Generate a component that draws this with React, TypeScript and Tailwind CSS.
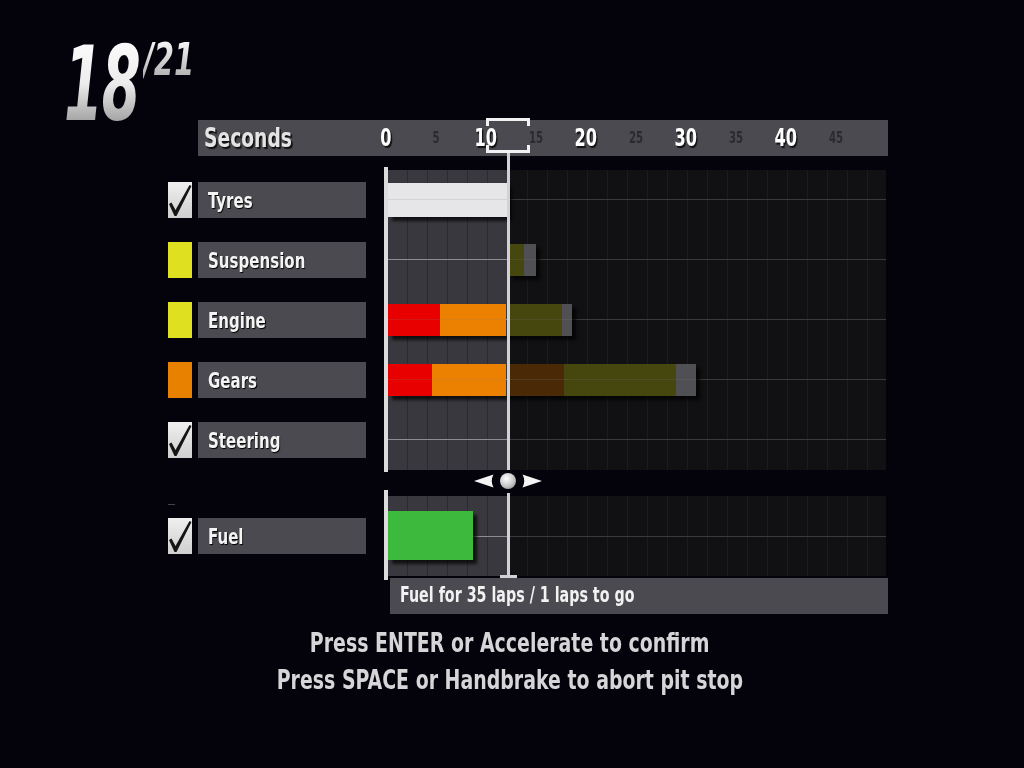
import React from 'react';

type Seg = { w: number; color: string; gap?: number };
type Row = { name: string; mark: string; start?: number; h?: number; segs: Seg[] };

const rows: Row[] = [
  { name: 'Tyres', mark: 'check', h: 34, segs: [{ w: 120, color: '#e6e6e8' }] },
  { name: 'Suspension', mark: '#dfe01f', start: 121, segs: [{ w: 15, color: '#46460f' }, { w: 12, color: '#505054' }] },
  {
    name: 'Engine',
    mark: '#dfe01f',
    segs: [
      { w: 52, color: '#e80000' },
      { w: 66, color: '#ec8000' },
      { w: 53, color: '#46460f', gap: 3 },
      { w: 10, color: '#505054' },
    ],
  },
  {
    name: 'Gears',
    mark: '#e88000',
    segs: [
      { w: 44, color: '#e80000' },
      { w: 74, color: '#ec8000' },
      { w: 55, color: '#4a2a06', gap: 3 },
      { w: 112, color: '#46460f' },
      { w: 20, color: '#505054' },
    ],
  },
  { name: 'Steering', mark: 'check', segs: [] },
];

const ticks = [0, 5, 10, 15, 20, 25, 30, 35, 40, 45];

function Mark({ mark }: { mark: string }) {
  if (mark === 'check') {
    return (
      <div className="w-6 h-9 bg-gradient-to-b from-[#f0f0f0] to-[#cfcfcf]">
        <svg width="24" height="36" viewBox="0 0 24 36">
          <path d="M1 22 L3.5 20.5 L7.5 28 L21.5 3 L23.5 4 L8.5 34 L6.5 34 Z" fill="#151515" />
        </svg>
      </div>
    );
  }
  return <div className="w-6 h-9" style={{ background: mark }} />;
}

function Label({ name, mark }: { name: string; mark: string }) {
  return (
    <div className="flex items-center gap-[6px]">
      <Mark mark={mark} />
      <div className="w-[168px] h-9 bg-[#4a4a50] flex items-center pl-[10px] text-[22px] text-[#f4f4f4] [text-shadow:1px_1px_1px_#000]">
        <span className="inline-block origin-left scale-x-[0.76] whitespace-nowrap">{name}</span>
      </div>
    </div>
  );
}

function Arrow({ flip }: { flip?: boolean }) {
  return (
    <svg width="20" height="14" viewBox="0 0 20 14" className={flip ? 'scale-x-[-1]' : ''}>
      <path d="M0 7 L19.5 0.5 Q16 7 19.5 13.5 Z" fill="#f4f4f4" />
    </svg>
  );
}

export default function App() {
  return (
    <div className="relative w-[1024px] h-[768px] overflow-hidden bg-[#04030b] font-['DejaVu_Sans_Condensed','DejaVu_Sans',sans-serif] font-bold">
      {/* lap counter */}
      <div className="h-[120px] pl-[64px] pt-[32px] flex items-start italic leading-none">
        <span className="inline-block origin-left scale-x-[0.6] text-[104px] tracking-[-2px] bg-gradient-to-b from-white via-[#ececec] to-[#8a8a8a] bg-clip-text text-transparent">
          18
        </span>
        <span className="inline-block origin-left scale-x-[0.72] ml-[-47px] mt-[5px] text-[45px] bg-gradient-to-b from-white to-[#a8a8a8] bg-clip-text text-transparent">
          /21
        </span>
      </div>

      <div className="ml-[168px]">
        {/* seconds header */}
        <div className="ml-[30px] w-[690px] h-9 bg-[#4a4a50] flex items-center">
          <div className="w-[163px] pl-[6px] text-[26px] text-[#e4e4e4] [text-shadow:2px_2px_1px_#111]">
            <span className="inline-block origin-left scale-x-[0.8]">Seconds</span>
          </div>
          {ticks.map(t => (
            <div key={t} className="w-[50px] text-center">
              {t % 10 === 0 ? (
                <span className="inline-block scale-x-[0.72] text-[25px] text-white [text-shadow:2px_2px_1px_#111]">{t}</span>
              ) : (
                <span className="inline-block scale-x-[0.7] text-[16px] text-[#2a2a2f]">{t}</span>
              )}
            </div>
          ))}
        </div>

        {/* main chart */}
        <div className="mt-[14px] flex">
          <div className="w-[216px]">
            {rows.map(r => (
              <div key={r.name} className="h-[60px] flex items-center">
                <Label name={r.name} mark={r.mark} />
              </div>
            ))}
          </div>
          <div className="w-1 h-[305px] mt-[-3px] mb-[-2px] bg-[#dcdcdc]" />
          <div className="relative w-[498px] h-[300px] flex">
            <div className="w-[120px] bg-[#38383e] bg-[repeating-linear-gradient(180deg,transparent_0_29px,#8c8c92_29px_30px,transparent_30px_60px),repeating-linear-gradient(90deg,transparent_0_19px,#2a2a30_19px_20px)]" />
            <div className="flex-1 bg-[#111114] bg-[repeating-linear-gradient(180deg,transparent_0_29px,#3a3a3e_29px_30px,transparent_30px_60px),repeating-linear-gradient(90deg,transparent_0_19px,#1c1c20_19px_20px)]" />
            {/* bars */}
            <div className="absolute inset-0 flex flex-col">
              {rows.map(r => (
                <div key={r.name} className="h-[60px] flex items-center" style={{ paddingLeft: r.start ?? 0 }}>
                  <div className="flex shadow-[4px_4px_3px_rgba(0,0,0,0.7)]" style={{ height: r.h ?? 32 }}>
                    {r.segs.map((s, i) => (
                      <div
                        key={i}
                        className="bg-[linear-gradient(180deg,transparent_calc(50%-1px),rgba(128,128,128,0.18)_calc(50%-1px)_50%,transparent_50%)]"
                        style={{ width: s.w, marginLeft: s.gap ?? 0, backgroundColor: s.color }}
                      />
                    ))}
                  </div>
                </div>
              ))}
            </div>
          </div>
        </div>

        {/* scrubber */}
        <div className="h-[26px] flex items-center">
          <div className="w-[216px] self-start">
            <div className="w-[7px] h-px bg-[#444] mt-[34px]" />
          </div>
          <div className="ml-[90px] mt-[-4px] flex items-center gap-[6px]">
            <Arrow />
            <div className="w-4 h-4 rounded-full bg-[radial-gradient(circle_at_40%_35%,#ffffff,#c4c4c4_55%,#777_100%)]" />
            <Arrow flip />
          </div>
        </div>

        {/* fuel */}
        <div className="flex">
          <div className="w-[216px] h-[80px] flex items-center">
            <Label name="Fuel" mark="check" />
          </div>
          <div className="w-1 h-[90px] mt-[-6px] mb-[-4px] bg-[#dcdcdc]" />
          <div className="w-[498px] h-[80px] flex">
            <div className="w-[120px] bg-[#38383e] bg-[linear-gradient(180deg,transparent_40px,#8c8c92_40px_41px,transparent_41px),repeating-linear-gradient(90deg,transparent_0_19px,#2a2a30_19px_20px)] flex items-center">
              <div className="w-[85px] h-[49px] mt-[-2px] bg-[#3dba3d] shadow-[4px_4px_3px_rgba(0,0,0,0.7)]" />
            </div>
            <div className="flex-1 bg-[#111114] bg-[linear-gradient(180deg,transparent_40px,#3a3a3e_40px_41px,transparent_41px),repeating-linear-gradient(90deg,transparent_0_19px,#1c1c20_19px_20px)]" />
          </div>
        </div>

        {/* fuel info */}
        <div className="ml-[222px] mt-[2px] w-[498px] h-9 bg-[#4a4a50] flex items-center pl-[10px] text-[21px] text-[#f2f2f2]">
          <span className="inline-block origin-left scale-x-[0.755] whitespace-nowrap">Fuel for 35 laps / 1 laps to go</span>
        </div>
      </div>

      {/* prompts */}
      <div className="mt-[11px] pr-[5px] text-center text-[26px] leading-[37px] text-[#d6d6d8]">
        <div>
          <span className="inline-block scale-x-[0.81] whitespace-nowrap">Press ENTER or Accelerate to confirm</span>
        </div>
        <div>
          <span className="inline-block scale-x-[0.81] whitespace-nowrap">Press SPACE or Handbrake to abort pit stop</span>
        </div>
      </div>

      {/* current time marker */}
      <div className="absolute left-[486px] top-[118px]">
        <svg width="44" height="36" viewBox="0 0 44 36">
          <path d="M1.5 8 V1.5 H42.5 V8" fill="none" stroke="#f2f2f2" strokeWidth="3" />
          <path d="M1.5 27 V33.5 H42.5 V27" fill="none" stroke="#f2f2f2" strokeWidth="3" />
        </svg>
      </div>
      <div className="absolute left-[507px] top-[153px] w-[3px] h-[317px] bg-[#d2d2d6]" />
      <div className="absolute left-[507px] top-[493px] w-[3px] h-[84px] bg-[#d2d2d6]" />
      <div className="absolute left-[500px] top-[575px] w-[17px] h-[3px] bg-[#d2d2d6]" />
    </div>
  );
}
